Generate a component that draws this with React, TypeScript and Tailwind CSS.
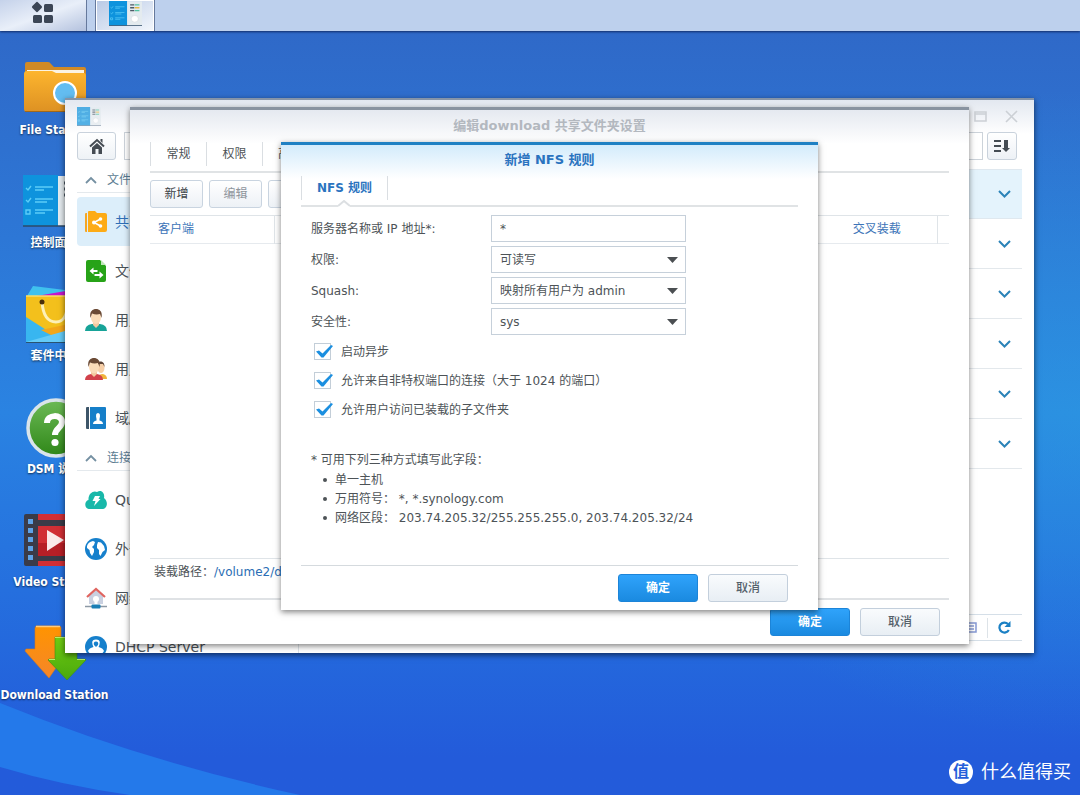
import React from "react";

const PRIMARY =
  "h-7 w-20 rounded-[3px] border border-[#1c84d8] bg-linear-to-b from-[#2fa3fb] to-[#1a8ae0] pb-px text-xs font-bold text-white";
const SECONDARY =
  "h-7 w-20 rounded-[3px] border border-[#c3cfdc] bg-linear-to-b from-[#f9fbfd] to-[#e8eef4] pb-px text-xs font-medium text-[#55616b]";
const SMALL =
  "h-7 w-[53px] shrink-0 rounded-[3px] border border-[#c9d4e0] bg-linear-to-b from-white to-[#edf1f6] text-xs";

/* ---------- desktop icons ---------- */

function PanelIcon({ className }: { className: string }) {
  return (
    <svg className={className} viewBox="0 0 64 52" preserveAspectRatio="none" aria-hidden="true">
      <rect x="34" y="1" width="30" height="50" fill="#e4ebef" />
      <rect x="0" y="0" width="35" height="51" fill="#0e93dd" />
      <path d="M0 51h64" stroke="#2c4a68" strokeWidth="1.5" />
      <g fill="none" stroke="#5ccdf8" strokeWidth="1.4">
        <path d="M3 13l2 2 3-4M12 12h18M12 15h9M3 25l2 2 3-4M12 24h18M12 27h12" />
        <path d="M3 35h4v4H3zM12 35h18M12 38h10" />
      </g>
      <path d="M41 8h8M41 14h8M41 20h8" stroke="#4d5a66" strokeWidth="3" />
      <path d="M50 8h9M50 20h9" stroke="#53c3a2" strokeWidth="3" />
      <path d="M50 14h9" stroke="#e5b944" strokeWidth="3" />
      <circle cx="50" cy="37" r="7" fill="#fff" stroke="#ccd3d8" />
    </svg>
  );
}

function FolderIcon() {
  return (
    <svg className="h-[52px] w-16" viewBox="0 0 64 52" aria-hidden="true">
      <defs>
        <linearGradient id="fo" x1="0" y1="0" x2="0" y2="1">
          <stop offset="0" stopColor="#fdb52e" />
          <stop offset="1" stopColor="#dd9123" />
        </linearGradient>
      </defs>
      <path d="M2 2Q2 0 4 0H25Q27 0 28 2L31 5H61Q63 5 63 7V20H2Z" fill="#d08a26" />
      <path d="M4 8h57v8H4z" fill="#fbf3e2" />
      <path d="M1 12Q1 9 4 9H29L33 11H61Q63 11 63 14V47Q63 50 60 50H4Q1 50 1 47Z" fill="url(#fo)" />
      <path d="M2 49.500h60" stroke="#9f681b" />
      <circle cx="42" cy="31" r="11" fill="#63bdf1" stroke="#fff" strokeWidth="2" />
    </svg>
  );
}

function BagIcon() {
  return (
    <svg className="h-[60px] w-16" viewBox="0 0 64 60" aria-hidden="true">
      <path d="M4 12L10 2 50 7 60 14Z" fill="#3fc1ee" />
      <path d="M8 13L60 4V14Z" fill="#c317cf" />
      <path d="M3 12H64V58H3Z" fill="#f3c01c" />
      <path d="M3 33L42 58H3Z" fill="#38b6f0" />
      <path d="M64 36L18 46 42 58H64Z" fill="#f3a71a" />
      <path d="M3 58L42 47 64 58Z" fill="#64cbf8" />
      <path d="M3 12H64" stroke="#fbdc6a" strokeWidth="1.500" />
      <path d="M19 18C20 31 25 38 33 38S44 31 45 18" fill="none" stroke="#fdf1b8" strokeWidth="3" />
      <circle cx="19" cy="18" r="2.500" fill="#4b2f08" />
      <circle cx="45" cy="18" r="2.500" fill="#4b2f08" />
      <path d="M3 58.500H64" stroke="#2b5370" />
    </svg>
  );
}

function HelpIcon() {
  return (
    <svg className="h-[62px] w-16" viewBox="0 0 64 62" aria-hidden="true">
      <defs>
        <linearGradient id="he" x1="0" y1="0" x2="0" y2="1">
          <stop offset="0" stopColor="#6cba56" />
          <stop offset="1" stopColor="#2f8718" />
        </linearGradient>
      </defs>
      <circle cx="33" cy="32" r="28" fill="url(#he)" stroke="#d9e4ea" strokeWidth="3.500" />
      <path d="M24 27C24 18 39 18 39 26C39 32 32 32 32 39" fill="none" stroke="#fff" strokeWidth="6" />
      <circle cx="32" cy="46.500" r="3.600" fill="#fff" />
    </svg>
  );
}

function VideoIcon() {
  return (
    <svg className="h-[54px] w-16" viewBox="0 0 64 54" aria-hidden="true">
      <rect x="1" y="1" width="62" height="52" rx="2" fill="#3a3b48" />
      <path d="M15 1H63V7H15ZM15 13H63V43H15ZM15 48H63V53H15Z" fill="#d12f35" />
      <path d="M15 30H63V43H15Z" fill="#b71f26" />
      <path d="M5 6h5v5H5zM5 15h5v5H5zM5 24h5v5H5zM5 33h5v5H5zM5 42h5v5H5z" fill="#5fa2e6" />
      <path d="M24 17L41 27 24 38Z" fill="#fbeaea" />
    </svg>
  );
}

function DownloadIcon() {
  return (
    <svg className="h-14 w-16" viewBox="0 0 64 56" aria-hidden="true">
      <defs>
        <linearGradient id="d1" x1="0" y1="0" x2="0" y2="1">
          <stop offset="0" stopColor="#ff9400" />
          <stop offset="1" stopColor="#f5862a" />
        </linearGradient>
        <linearGradient id="d2" x1="0" y1="0" x2="0" y2="1">
          <stop offset="0" stopColor="#6fcc12" />
          <stop offset="1" stopColor="#4aa80d" />
        </linearGradient>
      </defs>
      <path d="M13 1H36Q38 1 38 3V24H46L26 53 2 26 3 24H12V3Z" fill="url(#d1)" stroke="#d97b1a" strokeWidth=".6" />
      <path d="M13 1.500H37" stroke="#ffcb7c" strokeWidth="1.500" />
      <path d="M32 12H54V34H62L63 35 44 55 25 35 26 34H32Z" fill="url(#d2)" stroke="#3c8e14" strokeWidth=".6" />
      <path d="M32 12.500H54M26 34.500H32M54 34.500H62" stroke="#b7ef6a" />
    </svg>
  );
}

const DESKTOP: { label: string; icon: React.ReactNode }[] = [
  { label: "File Station", icon: <FolderIcon /> },
  { label: "控制面板", icon: <PanelIcon className="h-[52px] w-16" /> },
  { label: "套件中心", icon: <BagIcon /> },
  { label: "DSM 说明", icon: <HelpIcon /> },
  { label: "Video Station", icon: <VideoIcon /> },
  { label: "Download Station", icon: <DownloadIcon /> },
];

/* ---------- sidebar icons ---------- */

const S = "size-[22px] shrink-0";

const ShareIcon = () => (
  <svg className={S} viewBox="0 0 22 22" aria-hidden="true">
    <path d="M0 3Q0 2 1 2H2V21H1Q0 21 0 20Z" fill="#f5a623" />
    <path d="M3 1Q3 0 4 0H10L12 2H20Q22 2 22 4V19Q22 21 20 21H3Z" fill="#fdab16" />
    <path d="M15.500 8L9 11.500 15.500 15" fill="none" stroke="#fff" strokeWidth="1.500" />
    <circle cx="9" cy="11.500" r="2" fill="#fff" />
    <circle cx="15.500" cy="8" r="1.800" fill="#fff" />
    <circle cx="15.500" cy="15" r="1.800" fill="#fff" />
  </svg>
);
const FileServiceIcon = () => (
  <svg className={S} viewBox="0 0 22 22" aria-hidden="true">
    <path d="M1 2Q1 0 3 0H15L21 6V20Q21 22 19 22H3Q1 22 1 20Z" fill="#27a318" />
    <path d="M16 0L21 5H16Z" fill="#bfe6b8" />
    <path d="M4.500 11l4-3.500V10h4v2h-4v2.500ZM18.500 15l-4-3.500V14h-5v2h5v2.500Z" fill="#fff" />
  </svg>
);
const UserIcon = () => (
  <svg className={S} viewBox="0 0 22 22" aria-hidden="true">
    <path d="M0 22Q0 16 7 15H15Q22 16 22 22Z" fill="#17a398" />
    <path d="M8 12H14V16L11 19 8 16Z" fill="#f3c9a0" />
    <ellipse cx="11" cy="8.500" rx="5" ry="6.500" fill="#fbdcb8" />
    <path d="M5.500 9C4 2 8 0 11 0S18 2 16.500 9L15 5Q11 6 7 4.500Z" fill="#6b4a35" />
  </svg>
);
const GroupIcon = () => (
  <svg className={S} viewBox="0 0 22 22" aria-hidden="true">
    <path d="M12 21Q13 16 18 16Q22 17 22 21Z" fill="#f0b43c" />
    <ellipse cx="16" cy="9.500" rx="3.500" ry="5.500" fill="#f6cfa8" />
    <path d="M12 7C12 2 20 2 19.500 9L18 6H12Z" fill="#5b4336" />
    <path d="M0 22Q0 17 6 16H12Q18 17 18 22Z" fill="#d2414b" />
    <path d="M6 12H12V16L9 19 6 16Z" fill="#f3c9a0" />
    <ellipse cx="9" cy="9" rx="5" ry="6.300" fill="#fbdcb8" />
    <path d="M3.500 9C2 2 6 0 9 0S16 2 14.500 9L13 5Q9 6 5 4.500Z" fill="#6b4a35" />
  </svg>
);
const DomainIcon = () => (
  <svg className={S} viewBox="0 0 22 22" aria-hidden="true">
    <path d="M1 1Q1 0 2 0H4V22H2Q1 22 1 21Z" fill="#3d5568" />
    <path d="M5 0H20Q21 0 21 1V21Q21 22 20 22H5Z" fill="#167fc9" />
    <path d="M8 17Q8 14 11.500 13.500V12Q10 6 13 6T14.500 12V13.500Q18 14 18 17Z" fill="#fff" />
  </svg>
);
const CloudIcon = () => (
  <svg className={S} viewBox="0 0 22 22" aria-hidden="true">
    <path d="M5 20C-1 20-1 12 3.500 11C3 4 9 1 12 3C17 0 20 5 19 9C24 13 22 20 17 20Z" fill="#19b8a9" />
    <path d="M10 7H15L13.500 10H15.500L9 17 10.500 12H7.500Z" fill="#fff" />
  </svg>
);
const GlobeIcon = () => (
  <svg className={S} viewBox="0 0 22 22" aria-hidden="true">
    <circle cx="11" cy="11" r="11" fill="#1680cc" />
    <path d="M2 8Q3 4 8 3L10 4 9 7 7 9 9 11 9 14 7 18 5 15 4.500 12 2 10Z" fill="#fff" />
    <path d="M12 7L13 4 16 4.500 19 8 20 12 17.500 14 15.500 18 14 16 14 12 12 10Z" fill="#fff" />
  </svg>
);
const NetworkIcon = () => (
  <svg className={S} viewBox="0 0 22 22" aria-hidden="true">
    <path d="M4 9L11 3 18 9V17H4Z" fill="#c9d0e0" />
    <circle cx="11" cy="12" r="3" fill="#fff" />
    <path d="M9.500 12H12.500V17H9.500Z" fill="#fff" />
    <path d="M2 10L11 2 20 10" fill="none" stroke="#e0645f" strokeWidth="2.200" />
    <path d="M0 19.500H22" stroke="#8d99a5" strokeWidth="1.500" />
    <rect x="6.500" y="17.500" width="9" height="4" rx="1" fill="#1b7fb5" />
  </svg>
);
const DhcpIcon = () => (
  <svg className={S} viewBox="0 0 22 22" aria-hidden="true">
    <circle cx="11" cy="11" r="11" fill="#1680cc" />
    <path d="M3 15Q4 12 8.500 11Q5 3.500 11 3.500T13.500 11Q18 12 19 15Q16 20 11 20T3 15Z" fill="#fff" />
    <path d="M11 5.500Q14 5.500 13 9L11 11 9 9Q8 5.500 11 5.500Z" fill="#1680cc" />
  </svg>
);

const GROUPS = [
  {
    title: "文件共享",
    items: [
      { label: "共享文件夹", icon: <ShareIcon />, active: true },
      { label: "文件服务", icon: <FileServiceIcon /> },
      { label: "用户帐号", icon: <UserIcon /> },
      { label: "用户群组", icon: <GroupIcon /> },
      { label: "域/LDAP", icon: <DomainIcon /> },
    ],
  },
  {
    title: "连接性",
    items: [
      { label: "QuickConnect", icon: <CloudIcon /> },
      { label: "外部访问", icon: <GlobeIcon /> },
      { label: "网络", icon: <NetworkIcon /> },
      { label: "DHCP Server", icon: <DhcpIcon /> },
    ],
  },
];

const FOLDER_ROWS = [1, 2, 3, 4, 5, 6];

function Sidebar() {
  return (
    <nav className="w-[222px] shrink-0 overflow-hidden border-r border-[#dde3e8]">
      {GROUPS.map((g, i) => (
        <section key={g.title} className={i ? "pt-1" : "pt-2"}>
          <h2 className="mb-1 flex h-[25px] items-center gap-[10px] border-b border-[#e4e9ed] pl-2 text-xs text-[#5c7c92]">
            <svg className="h-2 w-3" viewBox="0 0 12 8" aria-hidden="true">
              <path d="M1 7L6 2 11 7" fill="none" stroke="#7590a2" strokeWidth="1.800" />
            </svg>
            {g.title}
          </h2>
          {g.items.map((it) => (
            <a
              key={it.label}
              href="#"
              className={
                it.active
                  ? "flex h-[49px] items-center gap-2 rounded-l-sm bg-[#dceefa] pl-2 text-sm whitespace-nowrap text-[#2f6fb6]"
                  : "flex h-[49px] items-center gap-2 pl-2 text-sm whitespace-nowrap text-[#4a5258]"
              }
            >
              {it.icon}
              {it.label}
            </a>
          ))}
        </section>
      ))}
    </nav>
  );
}

/* ---------- form pieces ---------- */

const FIELD = "h-[27px] w-full border border-[#c6d0da] bg-white px-2 text-xs text-[#4d5357]";

function SelectRow({ id, label, value }: { id: string; label: string; value: string }) {
  return (
    <div className="flex items-center">
      <label htmlFor={id} className="w-[180px] shrink-0">
        {label}
      </label>
      <div className="relative w-[195px]">
        <select id={id} className={FIELD + " appearance-none"} defaultValue={value}>
          <option>{value}</option>
        </select>
        <svg className="pointer-events-none absolute top-[11px] right-2 h-[6px] w-[11px]" viewBox="0 0 11 6" aria-hidden="true">
          <path d="M0 0H11L5.500 6Z" fill="#4b4f52" />
        </svg>
      </div>
    </div>
  );
}

function CheckRow({ id, label }: { id: string; label: string }) {
  return (
    <div className="flex h-[29px] items-center gap-[10px] pl-[3px]">
      <span className="relative size-[17px]">
        <input id={id} type="checkbox" defaultChecked className="peer block size-[17px] appearance-none border border-[#c3ced8] bg-white" />
        <svg
          className="pointer-events-none absolute top-0 left-px hidden h-4 w-[19px] peer-checked:block"
          viewBox="0 0 19 16"
          aria-hidden="true"
        >
          <path d="M1 8.500L4 7.500 7.500 10.500 16 2 18 3 8.500 14.500 6.500 14.500Z" fill="#1b8fe0" />
        </svg>
      </span>
      <label htmlFor={id}>{label}</label>
    </div>
  );
}

const HINTS = ["单一主机", "万用符号： *, *.synology.com", "网络区段： 203.74.205.32/255.255.255.0, 203.74.205.32/24"];

function RuleDialog() {
  return (
    <section
      role="dialog"
      aria-labelledby="rule-title"
      className="absolute inset-x-[151px] top-8 border-t-3 border-[#1f80c3] bg-white bg-linear-to-b from-[#d3ebfb] to-white to-[34px] text-xs text-[#4d5357] shadow-[0_2px_6px_rgba(0,0,0,0.5)]"
    >
      <h2 id="rule-title" className="h-[31px] pt-[5px] text-center text-[13px] leading-5 font-bold text-[#2a73bf]">
        新增 NFS 规则
      </h2>
      <div className="mx-5 flex h-[31px] border-b-2 border-[#e0e3e5]">
        <button className="relative h-6 border-x border-[#dadee2] px-[15px] font-bold text-[#2a73bf]">
          NFS 规则
          <svg className="absolute top-6 left-9 h-2 w-3" viewBox="0 0 12 8" aria-hidden="true">
            <path d="M0 6L6 1 12 6V8H0Z" fill="#fff" />
            <path d="M0 6L6 1 12 6" fill="none" stroke="#dcdfe2" strokeWidth="2" />
          </svg>
        </button>
      </div>
      <form className="px-[30px] pt-2">
        <div className="flex flex-col gap-1">
          <div className="flex items-center">
            <label htmlFor="host" className="w-[180px] shrink-0">
              服务器名称或 IP 地址*:
            </label>
            <input id="host" className={FIELD + " max-w-[195px]"} defaultValue="*" />
          </div>
          <SelectRow id="privilege" label="权限:" value="可读写" />
          <SelectRow id="squash" label="Squash:" value="映射所有用户为 admin" />
          <SelectRow id="security" label="安全性:" value="sys" />
        </div>
        <div className="pt-0.5">
          <CheckRow id="async" label="启动异步" />
          <CheckRow id="ports" label="允许来自非特权端口的连接（大于 1024 的端口）" />
          <CheckRow id="mounted" label="允许用户访问已装载的子文件夹" />
        </div>
        <div className="pt-[26px] leading-5 whitespace-pre">
          <p>* 可用下列三种方式填写此字段：</p>
          <ul className="list-none">
            {HINTS.map((t) => (
              <li key={t} className="flex h-[19px] items-center gap-2 pl-3">
                <span className="size-1 rounded-full bg-[#4d5357]" />
                {t}
              </li>
            ))}
          </ul>
        </div>
      </form>
      <footer className="mx-5 mt-[38px] flex justify-end gap-[10px] border-t border-[#d5dade] pt-2 pr-[10px] pb-2">
        <button className={PRIMARY}>确定</button>
        <button className={SECONDARY}>取消</button>
      </footer>
    </section>
  );
}

function FolderDialog() {
  return (
    <section
      role="dialog"
      aria-labelledby="folder-title"
      className="absolute inset-x-[65px] top-[7px] bottom-[9px] flex flex-col border-t-3 border-[#8993a0] bg-white bg-linear-to-b from-[#e5e9f0] to-white to-[34px] text-xs shadow-[0_2px_6px_rgba(0,0,0,0.5)]"
    >
      <h2 id="folder-title" className="h-8 shrink-0 pt-[6px] text-center text-[13px] leading-5 font-bold text-[#b3b8bf]">
        编辑download 共享文件夹设置
      </h2>
      <div className="mx-5 flex h-[31px] shrink-0 border-b-2 border-[#e0e3e5] text-[#4d5357]">
        {["常规", "权限", "高级权限", "NFS 权限"].map((t) => (
          <button key={t} className="h-6 min-w-14 border-l border-[#dadee2] px-[15px] whitespace-nowrap">
            {t}
          </button>
        ))}
      </div>
      <div className="mx-5 flex shrink-0 gap-[6px] pt-[7px]">
        <button className={SMALL + " text-[#3c4348]"}>新增</button>
        <button className={SMALL + " text-[#8e959c]"}>编辑</button>
        <button className={SMALL + " text-[#8e959c]"}>删除</button>
      </div>
      <div className="mx-5 mt-[7px] grow border-y border-[#dfe4e8]">
        <table className="w-full table-fixed border-collapse text-[#3c74b8]">
          <thead>
            <tr className="h-[27px] border-b border-[#e6eaee]">
              <th className="w-[124px] border-r border-[#dfe4e8] pl-2 text-left font-normal">客户端</th>
              <th />
              <th className="w-[120px] border-r border-[#dfe4e8] text-center font-normal">交叉装载</th>
              <th className="w-3" />
            </tr>
          </thead>
        </table>
      </div>
      <p className="mx-5 flex h-[41px] shrink-0 border-b-2 border-[#dfe2e5] pt-[5px] pl-1 text-[#4d5357]">
        装载路径：<span className="text-[#2a6db4]">/volume2/download</span>
      </p>
      <footer className="mr-[29px] flex shrink-0 justify-end gap-[10px] pt-2 pb-2">
        <button className={PRIMARY}>确定</button>
        <button className={SECONDARY}>取消</button>
      </footer>
      <RuleDialog />
    </section>
  );
}

function ControlPanel() {
  return (
    <section
      aria-label="控制面板"
      className="absolute top-[67px] right-[46px] bottom-[142px] left-[65px] flex flex-col border-t-2 border-[#8594a8] bg-white bg-linear-to-b from-[#e3e8f0] to-white to-[34px] shadow-[0_2px_6px_rgba(0,0,0,0.6)]"
    >
      <header className="flex h-8 shrink-0 items-center justify-between pr-4 pl-3">
        <PanelIcon className="h-[19px] w-6 opacity-70" />
        <div className="flex items-center gap-[18px]">
          <button aria-label="最大化">
            <svg className="block size-[13px]" viewBox="0 0 13 13" aria-hidden="true">
              <path d="M1 2H12V11H1ZM1 4H12" fill="none" stroke="#ccd0d5" strokeWidth="1.600" />
            </svg>
          </button>
          <button aria-label="关闭">
            <svg className="block size-[13px]" viewBox="0 0 13 13" aria-hidden="true">
              <path d="M1 1L12 12M12 1L1 12" fill="none" stroke="#ccd0d5" strokeWidth="1.600" />
            </svg>
          </button>
        </div>
      </header>
      <div className="flex h-7 shrink-0 gap-2 pr-[17px] pl-3">
        <button aria-label="主页" className="flex w-[39px] items-center justify-center rounded-[3px] border border-[#c9d2dc] bg-linear-to-b from-white to-[#eef2f6]">
          <svg className="size-4" viewBox="0 0 16 16" aria-hidden="true">
            <path d="M1 8.500L8 2 15 8.500" fill="none" stroke="#454c53" strokeWidth="2" />
            <path d="M3 9.500L8 5 13 9.500V16H9.500V11H6.500V16H3ZM11.500 1H13.500V5L11.500 3Z" fill="#454c53" />
          </svg>
        </button>
        <input aria-label="搜索" className="min-w-0 grow border border-[#ccd3da] bg-white" />
        <button aria-label="排序" className="-ml-1 flex w-[30px] items-center justify-center rounded-[3px] border border-[#c9d2dc] bg-linear-to-b from-white to-[#edf1f6]">
          <svg className="h-3 w-4" viewBox="0 0 16 12" aria-hidden="true">
            <path d="M0 1H7M0 6H7M0 11H7" stroke="#454c53" strokeWidth="2" />
            <path d="M10 0H14V8H16L12 12 8 8H10Z" fill="#454c53" />
          </svg>
        </button>
      </div>
      <div className="flex min-h-0 grow pl-3">
        <Sidebar />
        <div className="flex min-w-0 grow flex-col pt-[9px] pr-3 pb-3">
          <ul className="grow">
            {FOLDER_ROWS.map((n) => (
              <li
                key={n}
                className={
                  n === 1
                    ? "flex h-[50px] items-center justify-end border-y border-[#dfe8ef] bg-[#e4f3fc] pr-[11px]"
                    : "flex h-[50px] items-center justify-end border-b border-[#e3e8ec] pr-[11px]"
                }
              >
                <button aria-label="展开">
                  <svg className="block h-2 w-[13px]" viewBox="0 0 13 8" aria-hidden="true">
                    <path d="M1 1L6.500 6.500 12 1" fill="none" stroke="#2b83b8" strokeWidth="2" />
                  </svg>
                </button>
              </li>
            ))}
          </ul>
          <footer className="flex h-[27px] shrink-0 items-center justify-end gap-[10px] border-t border-b border-[#d5dfe8] pr-[11px]">
            <svg className="h-[11px] w-3" viewBox="0 0 12 11" aria-hidden="true">
              <path d="M0 1H11V10H0M3 4H9M3 7H9" fill="none" stroke="#8799d4" strokeWidth="1.500" />
            </svg>
            <span className="h-5 w-px bg-[#dde3e8]" />
            <button aria-label="刷新">
              <svg className="block size-[13px]" viewBox="0 0 13 13" aria-hidden="true">
                <path d="M10.800 9A5 5 0 1 1 10 3" fill="none" stroke="#1b80c4" strokeWidth="2.200" />
                <path d="M12.500 0V6H6.500Z" fill="#1b80c4" />
              </svg>
            </button>
          </footer>
        </div>
      </div>
      <FolderDialog />
    </section>
  );
}

export default function App() {
  return (
    <div className="flex min-h-screen flex-col overflow-hidden font-['DejaVu_Sans','Noto_Sans_CJK_SC',sans-serif]">
      <header className="z-10 flex h-[31px] items-stretch bg-[#bdd0ed] shadow-[0_1px_2px_rgba(10,30,80,0.8)]">
        <button aria-label="主菜单" className="mr-2 flex w-[87px] items-start justify-center border-r border-[#66799c] bg-linear-to-br from-[#c5d2ea] via-[#e9eff9] to-[#b4c2de] pt-px pr-1">
          <svg className="size-[23px]" viewBox="0 0 23 23" aria-hidden="true">
            <rect x="3" y="2" width="8" height="8" rx="1.500" transform="rotate(45 7 6)" fill="#3c4656" />
            <rect x="14" y="3" width="9" height="8" rx="1.500" fill="#3c4656" />
            <rect x="3" y="14" width="9" height="8" rx="1.500" fill="#3c4656" />
            <rect x="14" y="14" width="9" height="8" rx="1.500" fill="#3c4656" />
          </svg>
        </button>
        <button aria-label="控制面板窗口" className="flex w-[60px] items-start justify-center border-x border-[#66799c] bg-linear-to-br from-[#b9c9e5] to-[#f3f7fc] pt-px shadow-[inset_0_0_0_1px_#fff]">
          <PanelIcon className="h-[25px] w-[33px]" />
        </button>
      </header>
      <main className="relative grow overflow-hidden bg-linear-to-b from-[#2f69c8] via-[#2a83e2] via-50% to-[#235bda] to-95%">
        <div className="absolute inset-y-0 right-0 w-1/2 bg-radial-[at_100%_50%] from-[#2ca0e0]/50 to-transparent to-60%" />
        <svg className="absolute bottom-0 left-0 h-[92px] w-[300px]" viewBox="0 0 300 92" aria-hidden="true">
          <path d="M0 0Q140 57 300 92H130Q60 82 0 64Z" fill="#2479ea" />
        </svg>
        <ul className="relative w-[109px] pt-7">
          {DESKTOP.map((d) => (
            <li key={d.label} className="h-[113px]">
              <a href="#" className="flex flex-col items-center gap-[5px]">
                <span className="flex h-[58px] items-center">{d.icon}</span>
                <span className="font-['DejaVu_Sans_Condensed','DejaVu_Sans','Noto_Sans_CJK_SC',sans-serif] text-xs font-bold whitespace-nowrap text-white [text-shadow:0_1px_2px_rgba(0,0,0,0.6)]">
                  {d.label}
                </span>
              </a>
            </li>
          ))}
        </ul>
        <ControlPanel />
        <div className="absolute right-[9px] bottom-[9px] flex items-center gap-2 text-lg text-white">
          <span className="flex size-6 items-center justify-center rounded-full bg-white text-base font-bold text-[#2560da]">值</span>
          <span>什么值得买</span>
        </div>
      </main>
    </div>
  );
}
